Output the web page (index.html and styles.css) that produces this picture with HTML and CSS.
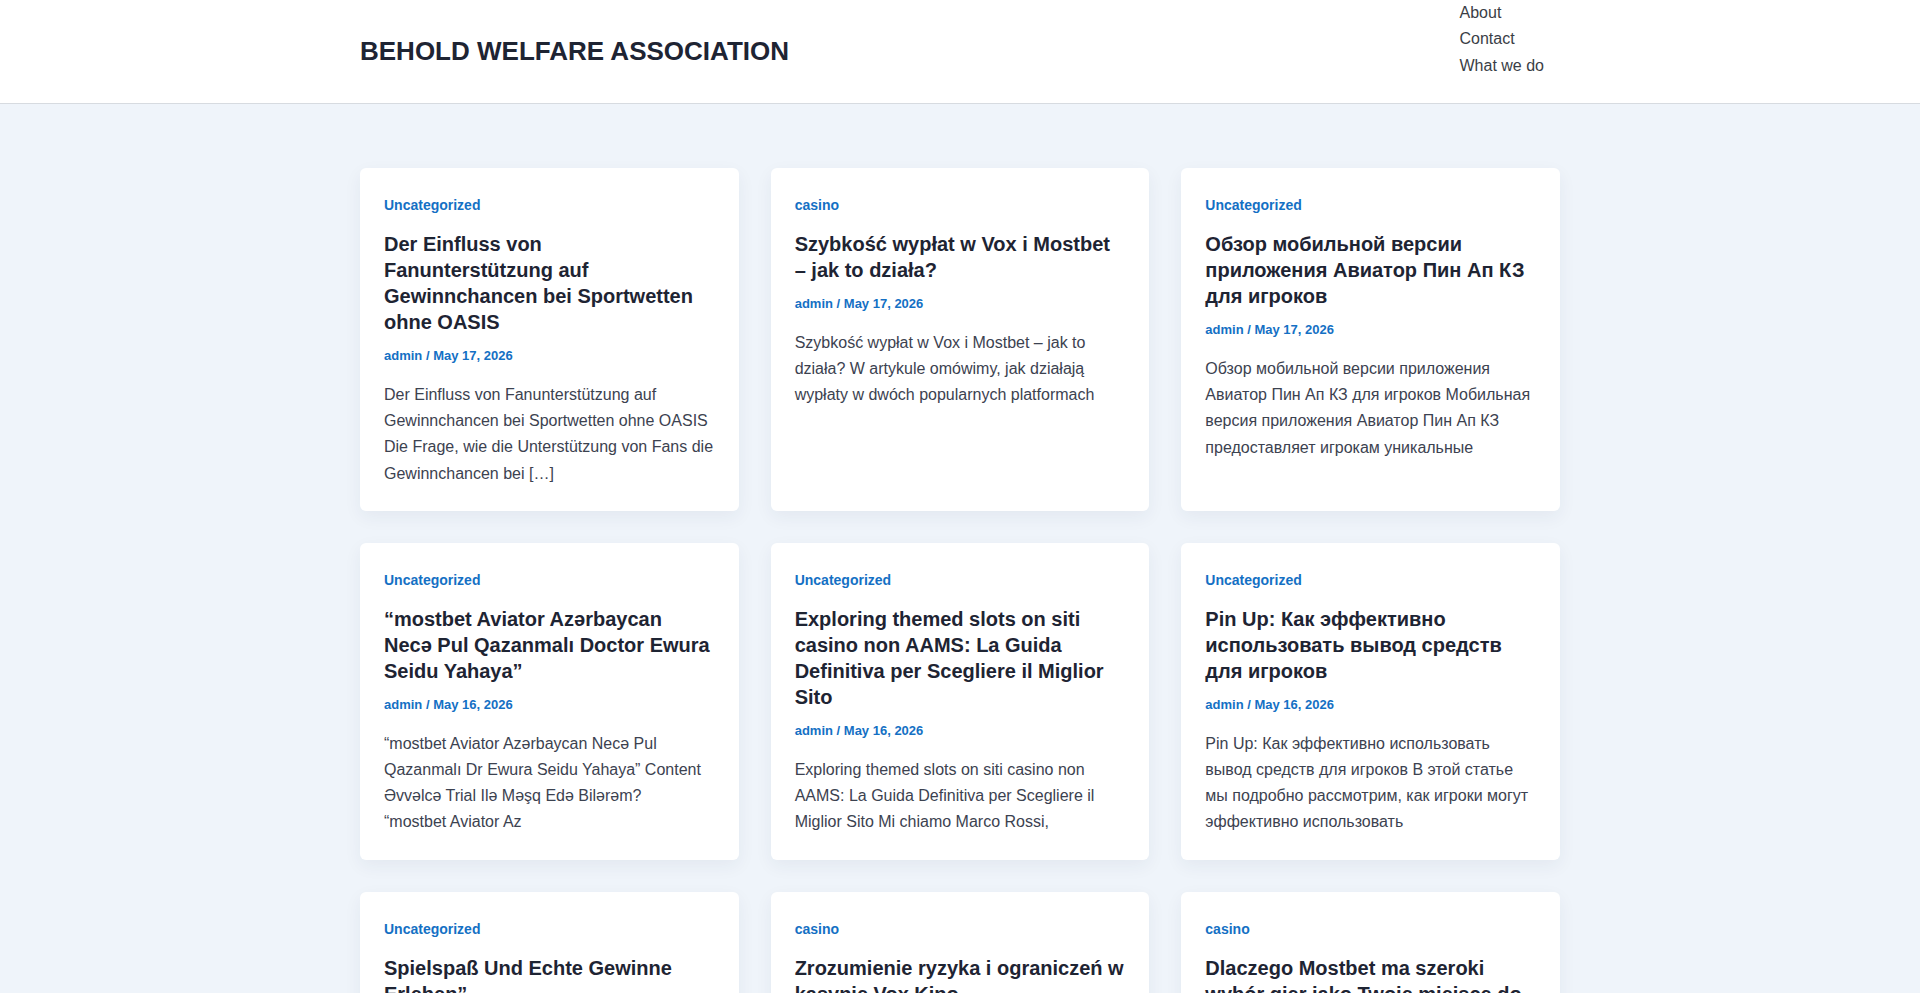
FILE: index.html
```html
<!DOCTYPE html>
<html lang="en">
<head>
<meta charset="utf-8">
<title>Behold Welfare Association</title>
<link rel="stylesheet" href="styles.css">
</head>
<body>
<header class="site-header">
  <div class="header-inner">
    <a class="site-title" href="#">BEHOLD WELFARE ASSOCIATION</a>
    <nav class="main-nav">
      <ul>
        <li><a href="#">About</a></li>
        <li><a href="#">Contact</a></li>
        <li><a href="#">What we do</a></li>
      </ul>
    </nav>
  </div>
</header>
<main class="content">
  <div class="posts">
    <article class="card">
      <a class="cat" href="#">Uncategorized</a>
      <h2 class="title">Der Einfluss von Fanunterstützung auf Gewinnchancen bei Sportwetten ohne OASIS</h2>
      <div class="meta"><a href="#">admin</a> / <a href="#">May 17, 2026</a></div>
      <p class="excerpt">Der Einfluss von Fanunterstützung auf Gewinnchancen bei Sportwetten ohne OASIS Die Frage, wie die Unterstützung von Fans die Gewinnchancen bei […]</p>
    </article>
    <article class="card">
      <a class="cat" href="#">casino</a>
      <h2 class="title">Szybkość wypłat w Vox i Mostbet – jak to działa?</h2>
      <div class="meta"><a href="#">admin</a> / <a href="#">May 17, 2026</a></div>
      <p class="excerpt">Szybkość wypłat w Vox i Mostbet – jak to działa? W artykule omówimy, jak działają wypłaty w dwóch popularnych platformach</p>
    </article>
    <article class="card">
      <a class="cat" href="#">Uncategorized</a>
      <h2 class="title">Обзор мобильной версии приложения Авиатор Пин Ап КЗ для игроков</h2>
      <div class="meta"><a href="#">admin</a> / <a href="#">May 17, 2026</a></div>
      <p class="excerpt">Обзор мобильной версии приложения Авиатор Пин Ап КЗ для игроков Мобильная версия приложения Авиатор Пин Ап КЗ предоставляет игрокам уникальные</p>
    </article>
    <article class="card">
      <a class="cat" href="#">Uncategorized</a>
      <h2 class="title">“mostbet Aviator Azərbaycan Necə Pul Qazanmalı Doctor Ewura Seidu Yahaya”</h2>
      <div class="meta"><a href="#">admin</a> / <a href="#">May 16, 2026</a></div>
      <p class="excerpt">“mostbet Aviator Azərbaycan Necə Pul Qazanmalı Dr Ewura Seidu Yahaya” Content Əvvəlcə Trial Ilə Məşq Edə Bilərəm?<br>“mostbet Aviator Az</p>
    </article>
    <article class="card">
      <a class="cat" href="#">Uncategorized</a>
      <h2 class="title">Exploring themed slots on siti casino non AAMS: La Guida Definitiva per Scegliere il Miglior Sito</h2>
      <div class="meta"><a href="#">admin</a> / <a href="#">May 16, 2026</a></div>
      <p class="excerpt">Exploring themed slots on siti casino non AAMS: La Guida Definitiva per Scegliere il Miglior Sito Mi chiamo Marco Rossi,</p>
    </article>
    <article class="card">
      <a class="cat" href="#">Uncategorized</a>
      <h2 class="title">Pin Up: Как эффективно использовать вывод средств для игроков</h2>
      <div class="meta"><a href="#">admin</a> / <a href="#">May 16, 2026</a></div>
      <p class="excerpt">Pin Up: Как эффективно использовать вывод средств для игроков В этой статье мы подробно рассмотрим, как игроки могут эффективно использовать</p>
    </article>
    <article class="card">
      <a class="cat" href="#">Uncategorized</a>
      <h2 class="title">Spielspaß Und Echte Gewinne Erleben”</h2>
      <div class="meta"><a href="#">admin</a> / <a href="#">May 16, 2026</a></div>
      <p class="excerpt">Spielspaß Und Echte Gewinne Erleben” Content Wie Funktioniert Das Spiel? Die Besten Strategien Für Anfänger</p>
    </article>
    <article class="card">
      <a class="cat" href="#">casino</a>
      <h2 class="title">Zrozumienie ryzyka i ograniczeń w kasynie Vox Kino</h2>
      <div class="meta"><a href="#">admin</a> / <a href="#">May 16, 2026</a></div>
      <p class="excerpt">Zrozumienie ryzyka i ograniczeń w kasynie Vox Kino Gry hazardowe mogą być świetną rozrywką</p>
    </article>
    <article class="card">
      <a class="cat" href="#">casino</a>
      <h2 class="title">Dlaczego Mostbet ma szeroki wybór gier jako Twoje miejsce do gry?</h2>
      <div class="meta"><a href="#">admin</a> / <a href="#">May 16, 2026</a></div>
      <p class="excerpt">Dlaczego Mostbet ma szeroki wybór gier jako Twoje miejsce do gry? Mostbet to platforma, która oferuje</p>
    </article>
  </div>
</main>
</body>
</html>
```
FILE: styles.css
```css
* { box-sizing: border-box; }
html, body { margin: 0; padding: 0; }
body {
  background: #eff4fa;
  font-family: "Liberation Sans", Arial, sans-serif;
  color: #3c4250;
}
a { text-decoration: none; color: inherit; }

.site-header {
  background: #ffffff;
  border-bottom: 1px solid #d7dbe0;
}
.header-inner {
  width: 1200px;
  margin: 0 auto;
  height: 103px;
  display: flex;
  justify-content: space-between;
  align-items: flex-start;
}
.site-title {
  align-self: center;
  font-size: 26px;
  font-weight: 700;
  color: #1e2433;
  line-height: 32px;
  margin-bottom: 2px;
}
.main-nav ul {
  list-style: none;
  margin: 0;
  padding: 0 16px 0 40px;
}
.main-nav li {
  font-size: 16px;
  line-height: 26.3px;
  color: #3a3e46;
}

.content {
  width: 1200px;
  margin: 0 auto;
  padding: 64px 0 64px;
}
.posts {
  display: grid;
  grid-template-columns: repeat(3, 1fr);
  gap: 32px;
}
.card {
  background: #ffffff;
  border-radius: 6px;
  box-shadow: 0 6px 18px rgba(30, 50, 90, 0.06);
  padding: 25px 24px 24px;
  display: flex;
  flex-direction: column;
  align-items: flex-start;
}
.cat {
  font-size: 14px;
  font-weight: 700;
  line-height: 24px;
  color: #1470c4;
}
.title {
  margin: 14px 0 0;
  font-size: 20px;
  line-height: 26px;
  font-weight: 700;
  color: #1e2433;
}
.meta {
  margin-top: 11px;
  font-size: 13px;
  font-weight: 700;
  line-height: 20px;
  color: #1470c4;
}
.excerpt {
  margin: 16px 0 0;
  font-size: 16px;
  line-height: 26.2px;
  color: #3c4250;
}
```
